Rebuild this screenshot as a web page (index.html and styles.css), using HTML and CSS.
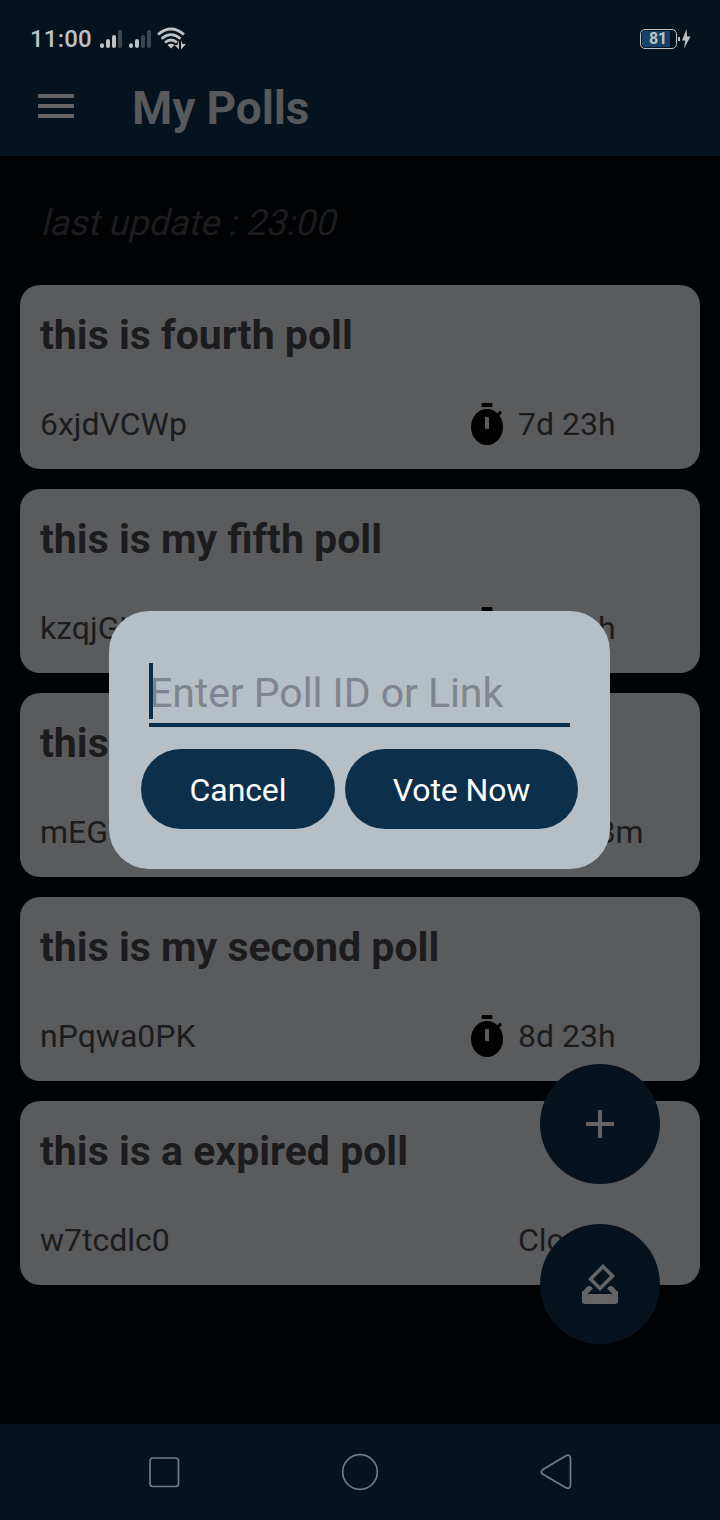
FILE: index.html
```html
<!DOCTYPE html>
<html lang="en">
<head>
<meta charset="utf-8">
<title>My Polls</title>
<link rel="stylesheet" href="styles.css">
</head>
<body>
<svg class="defs" width="0" height="0">
  <symbol id="timer" viewBox="0 0 34 44">
    <rect x="11.7" y="1" width="10.6" height="4"/>
    <ellipse cx="17" cy="25" rx="16" ry="18"/>
    <path d="M27 11.5L30 8.5L32 11L29 14Z"/>
    <rect class="hand" x="15" y="15" width="4" height="12"/>
  </symbol>
</svg>
<div class="screen">
  <header class="top">
    <div class="status">
      <span class="clock">11:00</span>
      <svg class="signals" width="90" height="24" viewBox="100 27 90 24">
        <g stroke-width="4" stroke-linecap="round">
          <path stroke="#bfc2c5" d="M102 45.3v.7M108 41v5M114 37v9M131 45.3v.7M137 41v5"/>
          <path stroke="#3b464f" d="M120 32v14M143 37v9M149 32v14"/>
        </g>
        <g fill="none" stroke="#bfc2c5" stroke-width="2.7">
          <path d="M158 34.5Q171 23.500 184 34.500M161.500 38.700Q171 30.500 180.500 38.700M165 42.500Q171 37.500 177 42.500"/>
        </g>
        <path fill="#bfc2c5" d="M167.500 45Q171 42.500 174.500 45L171 48.500ZM179 40v9.500l-4.500-4.500h3zM181 40v9.500l5-5.500h-3.500z"/>
      </svg>
      <div class="power">
        <span class="battery"><span class="level">81</span></span>
        <svg width="13" height="22" viewBox="678 27 13 22"><path fill="#bfc2c5" d="M678 36h2v4h-2zM686.500 28L682 39.500H685.200L684 47.500L690.500 35.500H687Z"/></svg>
      </div>
    </div>
    <div class="appbar">
      <div class="menu"><i></i><i></i><i></i></div>
      <h1>My Polls</h1>
    </div>
  </header>
  <main>
    <p class="updated"><span>last update : 23:00</span></p>
    <article class="card"><h2>this is fourth poll</h2><div class="meta"><span class="code">6xjdVCWp</span><svg class="timer"><use href="#timer"/></svg><span>7d 23h</span></div></article>
    <article class="card"><h2>this is my fifth poll</h2><div class="meta"><span class="code">kzqjGU</span><svg class="timer"><use href="#timer"/></svg><span>7d 23h</span></div></article>
    <article class="card"><h2>this is</h2><div class="meta"><span class="code">mEGT</span><svg class="timer"><use href="#timer"/></svg><span>23h 58m</span></div></article>
    <article class="card"><h2>this is my second poll</h2><div class="meta"><span class="code">nPqwa0PK</span><svg class="timer"><use href="#timer"/></svg><span>8d 23h</span></div></article>
    <article class="card"><h2>this is a expired poll</h2><div class="meta"><span class="code">w7tcdlc0</span><span class="timer"></span><span>Closed</span></div></article>
  </main>
  <nav>
    <svg width="720" height="96" viewBox="0 1424 720 96" fill="none" stroke="#737b82" stroke-width="1.7">
      <rect x="150" y="1458" width="28.500" height="28.500" rx="3"/>
      <circle cx="360" cy="1472" r="17.300"/>
      <path stroke-linejoin="round" d="M542.500 1469.800L565.500 1455.900Q570.500 1453.500 570.500 1459V1484.500Q570.500 1490 565.500 1487.500L542.500 1474Q540 1471.900 542.500 1469.800Z"/>
    </svg>
  </nav>
  <div class="actions">
    <div class="fab"><svg width="48" height="48" viewBox="0 0 48 48"><path d="M22 10h4v12h12v4H26v12h-4V26H10v-4h12z"/></svg></div>
    <div class="fab"><svg width="48" height="48" viewBox="0 0 48 48">
      <path fill-rule="evenodd" d="M27 4L39 16L24 31L12 19ZM27 9L17 19L24 26L34 16Z"/>
      <path d="M6 34V32L12 26H14.500L17 28.500L11.500 34H36.500L31 28.500L33.500 26H36L42 32V41Q42 44 39 44H9Q6 44 6 41Z"/>
    </svg></div>
  </div>
  <div class="dialog">
    <div class="field">Enter Poll ID or Link</div>
    <div class="buttons"><button class="cancel">Cancel</button><button class="vote">Vote Now</button></div>
  </div>
</div>
</body>
</html>
```
FILE: styles.css
```css
* { box-sizing: border-box; margin: 0; padding: 0; }
body { background: #010204; font-family: Roboto, sans-serif; }
.defs { position: absolute; }
.screen { position: relative; width: 720px; height: 1520px; display: flex; flex-direction: column; overflow: hidden; color: #1c1c1e; }
.top { height: 156px; background: #05131f; }
.status { height: 76px; display: flex; align-items: center; padding: 2px 29px 0 30px; color: #bfc2c5; }
.clock { width: 70px; font-size: 24px; font-weight: 500; white-space: nowrap; letter-spacing: .2px; }
.power { margin-left: auto; display: flex; align-items: center; gap: 1px; }
.battery { width: 37px; height: 20px; padding: 1px; border: 1px solid #bfc2c5; border-radius: 5px; }
.level { display: block; width: 28px; height: 16px; background: #164268; border-radius: 3px 0 0 3px; font-size: 16px; line-height: 16px; font-weight: 700; padding-left: 7px; letter-spacing: -.3px; }
.appbar { height: 80px; display: flex; padding-left: 38px; }
.menu { width: 94px; padding-top: 18px; display: flex; flex-direction: column; gap: 6px; }
.menu i { width: 36px; height: 4px; background: #656566; }
h1 { font-size: 46px; line-height: 64px; font-weight: 700; letter-spacing: -.1px; color: #58595b; }
main { flex: 1; padding: 0 20px; }
.updated { height: 129px; padding: 43px 0 0 20px; font-size: 36px; line-height: 48px; color: #1c1c1e; }
.updated span { display: inline-block; transform: skewX(-14deg); transform-origin: 0 37px; }
.card { height: 184px; margin-bottom: 20px; padding: 26px 20px 0; border-radius: 20px; background: #5a5b5c; }
h2 { font-size: 41px; line-height: 49px; font-weight: 700; }
.meta { display: flex; align-items: center; height: 44px; margin-top: 42px; font-size: 32px; }
.code { width: 430px; }
.timer { width: 34px; height: 44px; margin-right: 14px; }
.hand { fill: #5a5b5c; }
nav { height: 96px; background: #05131f; }
.actions { position: absolute; left: 540px; top: 1064px; display: flex; flex-direction: column; gap: 40px; }
.fab { width: 120px; height: 120px; border-radius: 50%; background: #05131f; display: flex; align-items: center; justify-content: center; }
.fab svg { fill: #656566; }
.dialog { position: absolute; left: 109px; top: 611px; width: 501px; height: 258px; padding: 52px 32px 0; border-radius: 40px; background: #b6bec6; }
.field { position: relative; height: 64px; width: 421px; margin-left: 8px; border-bottom: 4px solid #0c2f4b; font-size: 41px; letter-spacing: -.06px; line-height: 60px; color: #7f858e; }
.field::before { content: ""; position: absolute; left: 0; top: 0; width: 4px; height: 56px; background: #0c2f4b; }
.buttons { display: flex; gap: 10px; margin-top: 22px; }
button { height: 80px; border: 0; border-radius: 40px; background: #0c2f4b; color: #fff; font: 32px Roboto, sans-serif; letter-spacing: -.1px; padding-top: 1px; }
.cancel { width: 194px; }
.vote { width: 233px; }
```
